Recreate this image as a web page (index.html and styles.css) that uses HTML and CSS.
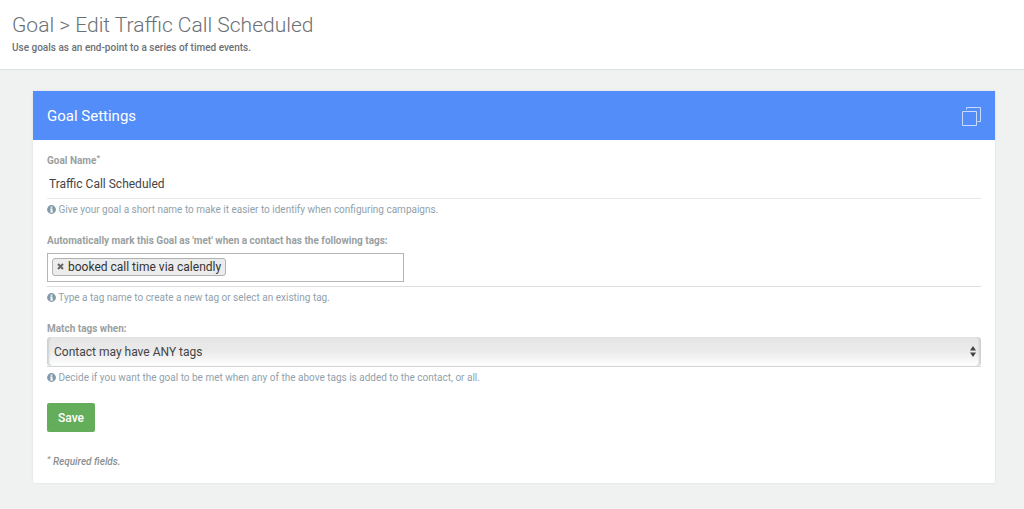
FILE: index.html
```html
<!DOCTYPE html>
<html lang="en">
<head>
    <meta charset="UTF-8">
    <meta name="viewport" content="width=device-width, initial-scale=1.0">
    <title>Goal &gt; Edit Traffic Call Scheduled</title>
    <link rel="stylesheet" href="styles.css">
</head>
<body>
    <header class="page-header">
        <h1>Goal &gt; Edit Traffic Call Scheduled</h1>
        <p>Use goals as an end-point to a series of timed events.</p>
    </header>

    <main class="content">
        <section class="card">
            <div class="card-header">
                <h2>Goal Settings</h2>
                <button type="button" class="icon-button" aria-label="Clone goal">
                    <svg width="20" height="20" viewBox="0 0 20 20" fill="none" stroke="currentColor">
                        <path d="M1.5 5.5h14v14h-14z"/>
                        <path d="M5.5 3.5v-2h14v14h-3"/>
                    </svg>
                </button>
            </div>

            <form class="card-body">
                <!-- Goal name -->
                <div class="field">
                    <label for="goalName">Goal Name<sup>*</sup></label>
                    <input type="text" id="goalName" class="text-input" value="Traffic Call Scheduled">
                    <p class="help"><svg class="info" viewBox="0 0 10 10"><circle cx="5" cy="5" r="4.9"/><path d="M4 1.6h2v1.5H4zM3.5 4h2.6v3.1h.7v1.1H3.4V7.1h.7V5.1h-.6z"/></svg> Give your goal a short name to make it easier to identify when configuring campaigns.</p>
                </div>

                <!-- Tags -->
                <div class="field">
                    <label for="goalTags">Automatically mark this Goal as 'met' when a contact has the following tags:</label>
                    <div class="tag-row">
                        <div class="tag-box">
                            <span class="tag">
                                <button type="button" class="tag-remove" aria-label="Remove tag">
                                    <svg width="7" height="7" viewBox="0 0 7 7"><path d="M1 1l5 5M6 1l-5 5"/></svg>
                                </button>
                                booked call time via calendly
                            </span>
                            <input type="text" id="goalTags" class="tag-input">
                        </div>
                    </div>
                    <p class="help"><svg class="info" viewBox="0 0 10 10"><circle cx="5" cy="5" r="4.9"/><path d="M4 1.6h2v1.5H4zM3.5 4h2.6v3.1h.7v1.1H3.4V7.1h.7V5.1h-.6z"/></svg> Type a tag name to create a new tag or select an existing tag.</p>
                </div>

                <!-- Match rule -->
                <div class="field">
                    <label for="matchTags">Match tags when:</label>
                    <div class="select-wrap">
                        <select id="matchTags">
                            <option>Contact may have ANY tags</option>
                            <option>Contact must have ALL tags</option>
                        </select>
                        <svg class="arrows" width="6" height="11" viewBox="0 0 6 11"><path d="M0 4.5L3 0l3 4.5zM0 6.5L3 11l3-4.5z"/></svg>
                    </div>
                    <p class="help"><svg class="info" viewBox="0 0 10 10"><circle cx="5" cy="5" r="4.9"/><path d="M4 1.6h2v1.5H4zM3.5 4h2.6v3.1h.7v1.1H3.4V7.1h.7V5.1h-.6z"/></svg> Decide if you want the goal to be met when any of the above tags is added to the contact, or all.</p>
                </div>

                <button type="submit" class="save">Save</button>
                <p class="required"><sup>*</sup> Required fields.</p>
            </form>
        </section>
    </main>
</body>
</html>
```
FILE: styles.css
```css
* {
    box-sizing: border-box;
}
body {
    margin: 0;
    background-color: #eff2f1;
    color: #444;
    font-family: Roboto, "Liberation Sans", sans-serif;
    font-size: 10px;
}
h1,
h2,
p {
    margin: 0;
}
button,
input,
select {
    font-family: inherit;
}
sup {
    font-size: 8px;
    line-height: 0;
}
.page-header {
    padding: 11px 12px 12px;
    background-color: #fff;
    border-bottom: 1px solid #dfe2e2;
    color: #6b7075;
}
.page-header h1 {
    font-size: 21px;
    font-weight: 300;
    line-height: 28px;
}
.page-header p {
    font-weight: 500;
    line-height: 18px;
}
.content {
    padding: 21px 29px 26px 33px;
}
.card {
    background-color: #fff;
    border-radius: 2px;
    box-shadow: 0 0 2px #d5dada;
}
.card-header {
    display: flex;
    align-items: center;
    justify-content: space-between;
    height: 49px;
    padding: 0 14px;
    background-color: #538dfa;
    color: #fff;
}
.card-header h2 {
    font-size: 15px;
    font-weight: 400;
}
.icon-button {
    display: flex;
    padding: 0;
    border: 0;
    background: none;
    color: #c9dcff;
}
.card-body {
    padding: 12px 14px 14px;
}
.field {
    margin-bottom: 12px;
}
.field label {
    display: block;
    padding-top: 1px;
    color: #9a9fa1;
    font-weight: 700;
    line-height: 15px;
}
.text-input {
    display: block;
    width: 100%;
    height: 31px;
    padding: 2px 2px 0;
    border: 0;
    border-bottom: 1px solid #e6e9e9;
    background: none;
    color: #444;
    font-size: 12px;
}
.help {
    padding-top: 1px;
    color: #91a1ac;
    line-height: 20px;
}
.info {
    width: 9px;
    height: 9px;
    vertical-align: -1px;
    fill: #8199a8;
}
.info path {
    fill: #fff;
}
.tag-row {
    padding: 5px 0 4px;
    border-bottom: 1px solid #dcdfdf;
}
.tag-box {
    display: flex;
    align-items: center;
    width: 357px;
    max-width: 100%;
    height: 29px;
    padding: 0 4px 2px;
    border: 1px solid #b4b6b6;
}
.tag {
    display: flex;
    flex: none;
    align-items: center;
    gap: 4px;
    height: 18px;
    padding: 0 4px;
    border: 1px solid #b0b2b2;
    border-radius: 3px;
    background-color: #ececec;
    color: #333;
    font-size: 12px;
}
.tag-remove {
    display: flex;
    padding: 0;
    border: 0;
    background: none;
}
.tag-remove path {
    stroke: #666;
    stroke-width: 2;
}
.tag-input {
    flex: 1;
    min-width: 0;
    border: 0;
    outline: 0;
    background: none;
}
.select-wrap {
    position: relative;
    padding-top: 1px;
    border-bottom: 1px solid #d4d7d7;
}
.select-wrap select {
    display: block;
    width: 100%;
    height: 29px;
    padding: 0 20px 0 7px;
    border: 0;
    border-radius: 4px;
    appearance: none;
    background: linear-gradient(#e5e5e5, #ebebeb 50%, #fff);
    box-shadow: inset 3px 0 2px -1px #ccd0d3, inset -3px 0 2px -1px #ccd0d3;
    color: #444;
    font-size: 12px;
}
.arrows {
    position: absolute;
    top: 10px;
    right: 5px;
    fill: #444;
    pointer-events: none;
}
.save {
    display: block;
    height: 29px;
    margin-top: 15px;
    padding: 0 11px;
    border: 0;
    border-radius: 2px;
    background-color: #64ad5b;
    color: #fff;
    font-size: 12px;
    font-weight: 500;
}
.required {
    margin-top: 22px;
    color: #8c9092;
    font-style: italic;
    font-weight: 500;
    line-height: 15px;
}
```
